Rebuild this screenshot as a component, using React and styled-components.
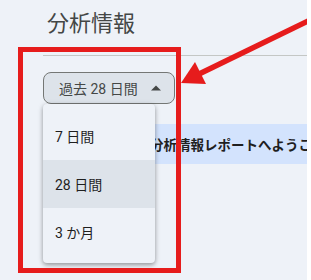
import React, { useState } from "react";
import styled, { createGlobalStyle } from "styled-components";

const GlobalStyle = createGlobalStyle`
  body {
    margin: 0;
    background: #ffffff;
    font-family: Roboto, "Noto Sans CJK JP", sans-serif;
  }
`;

const Page = styled.div`
  position: relative;
  width: 307px;
  height: 280px;
  background-color: #eef2f8;
  padding: 10px 0 0 43px;
  box-sizing: border-box;
  overflow: hidden;
`;

const Title = styled.h1`
  margin: 0;
  padding-left: 4px;
  font-size: 22px;
  line-height: 28px;
  font-weight: 400;
  color: #444746;
`;

const Divider = styled.div`
  height: 1px;
  margin-top: 17px;
  background-color: #c4c7c5;
`;

const PickerWrap = styled.div`
  position: relative;
  margin-top: 16px;
  width: 132px;
  z-index: 2;
`;

const PickerButton = styled.button`
  display: flex;
  align-items: center;
  justify-content: space-between;
  width: 132px;
  height: 32px;
  padding: 0 6px 0 15px;
  box-sizing: border-box;
  border: 1px solid #747775;
  border-radius: 8px;
  background-color: #dde3ea;
  color: #444746;
  font-family: Roboto, "Noto Sans CJK JP", sans-serif;
  font-size: 14px;
  cursor: pointer;
`;

const Menu = styled.ul`
  position: absolute;
  top: 100%;
  left: 0;
  width: 112px;
  margin: 0;
  padding: 8px 0 7px;
  list-style: none;
  background-color: #eef2f8;
  border-radius: 4px;
  box-shadow: 0 2px 4px rgba(0, 0, 0, 0.3), 0 1px 6px rgba(0, 0, 0, 0.12);
`;

const MenuItem = styled.li`
  display: flex;
  align-items: center;
  height: 48px;
  padding-left: 12px;
  font-size: 14px;
  color: #1f1f1f;
  background-color: ${(props) => (props.selected ? "#dde3ea" : "transparent")};
`;

const Banner = styled.div`
  margin-top: 20px;
  height: 40px;
  display: flex;
  align-items: center;
  padding-left: 53px;
  background-color: #d3e3fd;
  font-family: "Noto Sans CJK JP", sans-serif;
  font-size: 13.5px;
  font-weight: 700;
  color: #1f1f1f;
  white-space: nowrap;
  overflow: hidden;
`;

const Highlight = styled.div`
  position: absolute;
  left: 18px;
  top: 47px;
  width: 163px;
  height: 226px;
  border: 5px solid #e61c1c;
  box-sizing: border-box;
  pointer-events: none;
  z-index: 3;
`;

const ArrowSvg = styled.svg`
  position: absolute;
  left: 0;
  top: 0;
  pointer-events: none;
  z-index: 3;
`;

const options = ["7 日間", "28 日間", "3 か月"];

const App = () => {
  const [selected, setSelected] = useState(1);
  return (
    <>
      <GlobalStyle />
      <Page>
        <Title>分析情報</Title>
        <Divider />
        <PickerWrap>
          <PickerButton>
            <span>過去 28 日間</span>
            <svg width="24" height="24" viewBox="0 0 24 24">
              <path d="M7 14.5l5-5 5 5z" fill="#444746" />
            </svg>
          </PickerButton>
          <Menu>
            {options.map((o, i) => (
              <MenuItem
                key={o}
                selected={i === selected}
                onClick={() => setSelected(i)}
              >
                {o}
              </MenuItem>
            ))}
          </Menu>
        </PickerWrap>
        <Banner>サイトの分析情報レポートへようこそ</Banner>
        <Highlight />
        <ArrowSvg width="311" height="280" viewBox="0 0 311 280">
          <line
            x1="311"
            y1="19.5"
            x2="197"
            y2="75"
            stroke="#e61c1c"
            strokeWidth="5.5"
          />
          <polygon points="181,83 195,62 206,84" fill="#e61c1c" />
        </ArrowSvg>
      </Page>
    </>
  );
};

export default App;
